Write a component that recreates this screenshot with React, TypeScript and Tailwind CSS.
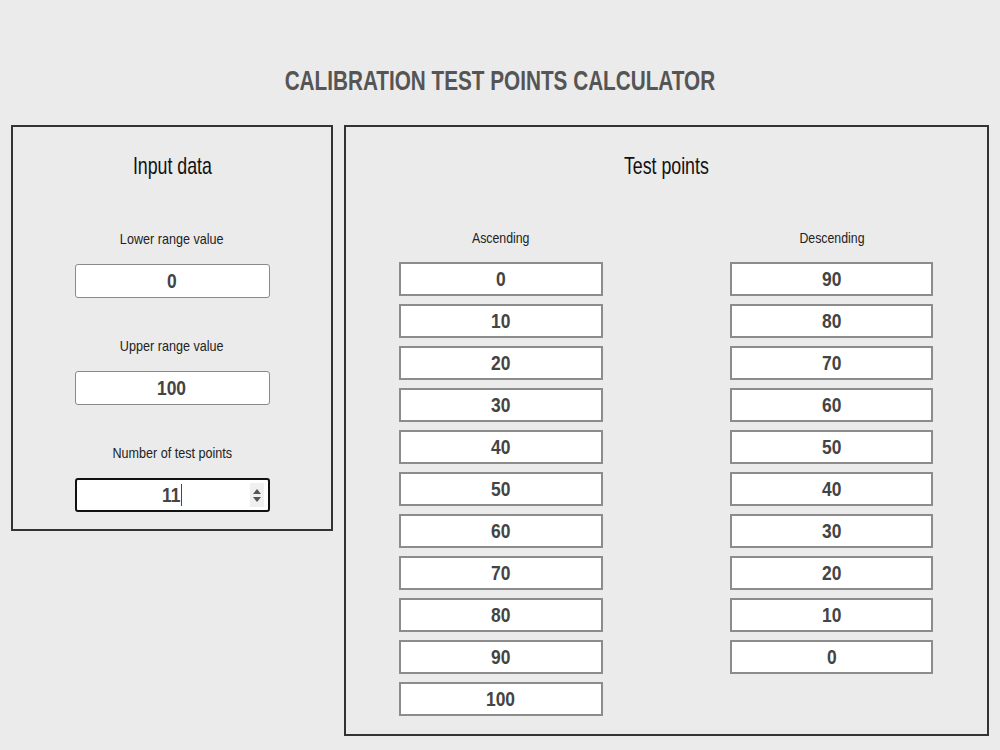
import React from "react"

const font = { fontFamily: '"Liberation Sans", Arial, sans-serif' }

const ascending = [0, 10, 20, 30, 40, 50, 60, 70, 80, 90, 100]
const descending = [90, 80, 70, 60, 50, 40, 30, 20, 10, 0]

// the reference uses a narrow face; squeeze Liberation Sans to match
function Narrow({ children, className }: { children: React.ReactNode; className: string }) {
  return <span className={`inline-block whitespace-nowrap ${className}`}>{children}</span>
}

function Field({ label, value, focused }: { label: string; value: string; focused?: boolean }) {
  return (
    <div className="flex flex-col items-center">
      <div className="h-[18px] text-[15px] leading-[18px] text-[#222]">
        <Narrow className="scale-x-[0.84]">{label}</Narrow>
      </div>
      <div
        className={`relative mt-[16px] flex h-[34px] w-[195px] items-center justify-center rounded-[3px] bg-white text-[21px] font-bold text-[#444] ${
          focused ? "border-2 border-[#111]" : "border border-[#8a8a8a]"
        }`}
      >
        <Narrow className="scale-x-[0.83]">
          {value}
          {focused && <span className="ml-[1px] inline-block h-[22px] w-[1px] translate-y-[4px] bg-[#222]" />}
        </Narrow>
        {focused && (
          <div className="absolute right-[4px] top-[3px] flex h-[24px] w-[14px] flex-col items-center justify-center gap-[3px] bg-[#f0f0f0]">
            <svg width="8" height="5" viewBox="0 0 8 5">
              <path d="M4 0 L8 5 L0 5 Z" fill="#555" />
            </svg>
            <svg width="8" height="5" viewBox="0 0 8 5">
              <path d="M0 0 L8 0 L4 5 Z" fill="#555" />
            </svg>
          </div>
        )}
      </div>
    </div>
  )
}

function Column({ title, values, width }: { title: string; values: number[]; width: string }) {
  return (
    <div className={`flex flex-col items-center ${width}`}>
      <div className="h-[18px] text-[14px] leading-[18px] text-[#222]">
        <Narrow className="scale-x-[0.88]">{title}</Narrow>
      </div>
      <div className="mt-[15px] flex w-full flex-col gap-[8px]">
        {values.map((v, i) => (
          <div
            key={i}
            className="flex h-[34px] w-full items-center justify-center border-2 border-[#8c8c8c] bg-white text-[21px] font-bold text-[#444]"
          >
            <Narrow className="scale-x-[0.83]">{v}</Narrow>
          </div>
        ))}
      </div>
    </div>
  )
}

export default function App() {
  return (
    <div className="h-[750px] w-full overflow-hidden bg-[#ebebeb]" style={font}>
      <h1 className="pt-[64px] text-center text-[28px] font-bold leading-[34px] text-[#555]">
        <Narrow className="scale-x-[0.74]">CALIBRATION TEST POINTS CALCULATOR</Narrow>
      </h1>

      <div className="mt-[27px] flex items-start gap-[11px] pl-[11px]">
        <div className="flex h-[406px] w-[322px] flex-col items-center border-2 border-[#333]">
          <div className="mt-[24px] h-[30px] text-[24px] leading-[30px] text-[#111]">
            <Narrow className="scale-x-[0.74]">Input data</Narrow>
          </div>
          <div className="mt-[49px]">
            <Field label="Lower range value" value="0" />
          </div>
          <div className="mt-[39px]">
            <Field label="Upper range value" value="100" />
          </div>
          <div className="mt-[39px]">
            <Field label="Number of test points" value="11" focused />
          </div>
        </div>

        <div className="flex h-[611px] w-[645px] flex-col border-2 border-[#333]">
          <div className="mt-[24px] h-[30px] text-center text-[24px] leading-[30px] text-[#111]">
            <Narrow className="scale-x-[0.74]">Test points</Narrow>
          </div>
          <div className="mt-[48px] flex items-start gap-[127px] pl-[53px]">
            <Column title="Ascending" values={ascending} width="w-[204px]" />
            <Column title="Descending" values={descending} width="w-[203px]" />
          </div>
        </div>
      </div>
    </div>
  )
}
